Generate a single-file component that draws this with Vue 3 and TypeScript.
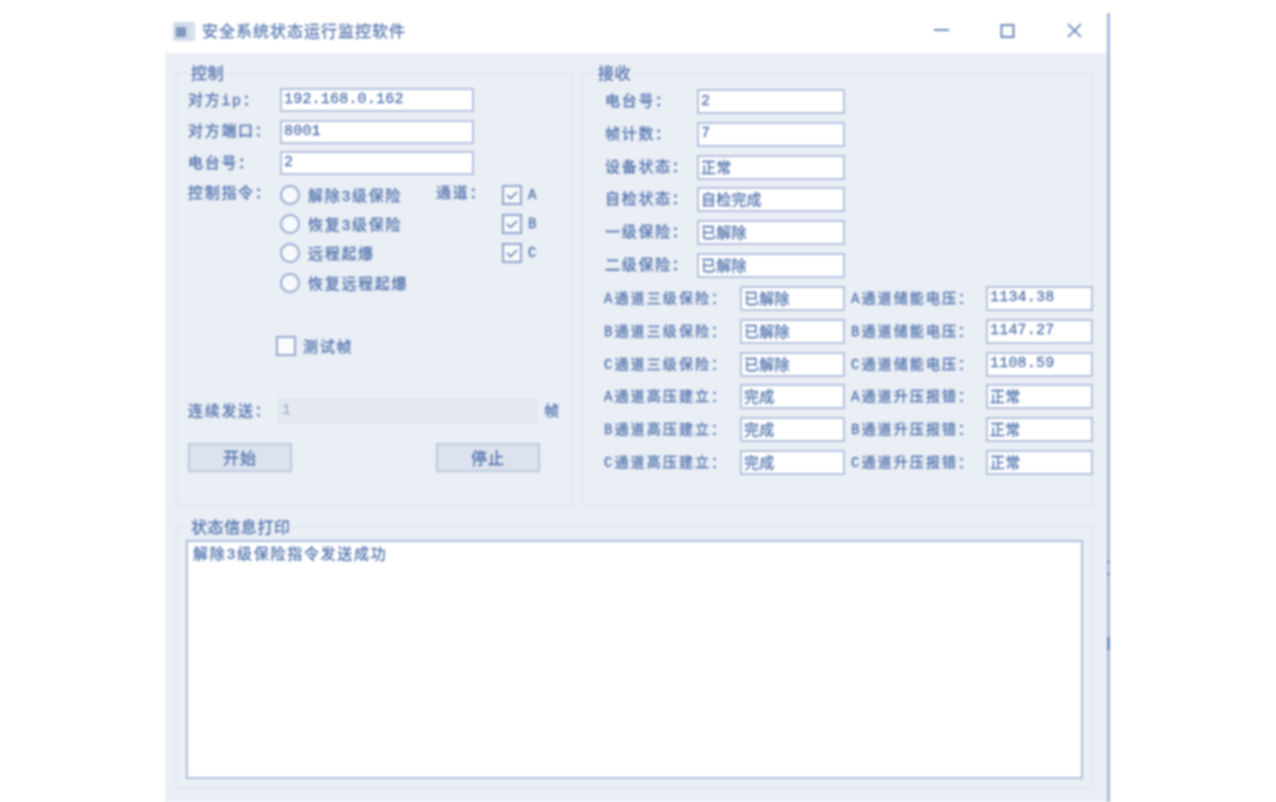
<script setup lang="ts">
interface Pair { label: string; value: string }
const topFields: Pair[] = [
  { label: '对方ip：', value: '192.168.0.162' },
  { label: '对方端口：', value: '8001' },
  { label: '电台号：', value: '2' },
]
const radios: string[] = ['解除3级保险', '恢复3级保险', '远程起爆', '恢复远程起爆']
const channels: string[] = ['A', 'B', 'C']
const status: Pair[] = [
  { label: '电台号：', value: '2' },
  { label: '帧计数：', value: '7' },
  { label: '设备状态：', value: '正常' },
  { label: '自检状态：', value: '自检完成' },
  { label: '一级保险：', value: '已解除' },
  { label: '二级保险：', value: '已解除' },
]
const details: Pair[] = [
  { label: 'A通道三级保险：', value: '已解除' },
  { label: 'A通道储能电压：', value: '1134.38' },
  { label: 'B通道三级保险：', value: '已解除' },
  { label: 'B通道储能电压：', value: '1147.27' },
  { label: 'C通道三级保险：', value: '已解除' },
  { label: 'C通道储能电压：', value: '1108.59' },
  { label: 'A通道高压建立：', value: '完成' },
  { label: 'A通道升压报错：', value: '正常' },
  { label: 'B通道高压建立：', value: '完成' },
  { label: 'B通道升压报错：', value: '正常' },
  { label: 'C通道高压建立：', value: '完成' },
  { label: 'C通道升压报错：', value: '正常' },
]
</script>

<template>
  <div class="page">
    <div class="window">
      <header class="titlebar">
        <svg class="app-icon" width="22" height="19" viewBox="0 0 22 19">
          <rect width="22" height="19" fill="#d3dbe9" />
          <rect x="3" y="5" width="10" height="10" fill="#8398bf" />
          <rect x="19" y="5" width="1" height="10" fill="#f2f4f9" />
        </svg>
        <span class="title">安全系统状态运行监控软件</span>
        <div class="controls">
          <svg width="16" height="16" viewBox="0 0 16 16"><path d="M0 7h15" stroke="#5f7db3" stroke-width="1.8" fill="none" /></svg>
          <svg width="16" height="16" viewBox="0 0 16 16"><rect x="1.5" y="2" width="12" height="12" stroke="#5f7db3" stroke-width="1.8" fill="none" /></svg>
          <svg width="16" height="16" viewBox="0 0 16 16"><path d="M2 1l13 13M15 1L2 14" stroke="#5f7db3" stroke-width="1.7" fill="none" /></svg>
        </div>
      </header>

      <main class="content">
        <section class="group control">
          <h2 class="legend">控制</h2>
          <div class="top-fields">
            <template v-for="f in topFields" :key="f.label">
              <span class="label">{{ f.label }}</span>
              <div class="field">{{ f.value }}</div>
            </template>
          </div>
          <div class="command">
            <span class="label">控制指令：</span>
            <ul class="radios">
              <li v-for="r in radios" :key="r" class="radio-row">
                <span class="radio"></span>
                <span class="label">{{ r }}</span>
              </li>
            </ul>
            <span class="label channel-label">通道：</span>
            <ul class="channels">
              <li v-for="c in channels" :key="c" class="channel-row">
                <svg class="check" width="20" height="20" viewBox="0 0 20 20">
                  <rect x="1" y="1" width="18" height="18" fill="#f7f9fc" stroke="#8fa5cb" stroke-width="2" />
                  <path d="M5 10l3.5 3.5L15 7" fill="none" stroke="#5f7db3" stroke-width="1.5" />
                </svg>
                <span class="mono">{{ c }}</span>
              </li>
            </ul>
          </div>
          <div class="test-row">
            <span class="box"></span>
            <span class="label">测试帧</span>
          </div>
          <div class="send-row">
            <span class="label">连续发送：</span>
            <div class="field disabled">1</div>
            <span class="label">帧</span>
          </div>
          <div class="buttons">
            <button class="btn" type="button">开始</button>
            <button class="btn" type="button">停止</button>
          </div>
        </section>

        <section class="group receive">
          <h2 class="legend">接收</h2>
          <div class="status-grid">
            <template v-for="s in status" :key="s.label">
              <span class="label">{{ s.label }}</span>
              <div class="field">{{ s.value }}</div>
            </template>
          </div>
          <div class="detail-grid">
            <template v-for="d in details" :key="d.label">
              <span class="label">{{ d.label }}</span>
              <div class="field">{{ d.value }}</div>
            </template>
          </div>
        </section>

        <section class="group log-group">
          <h2 class="legend">状态信息打印</h2>
          <div class="log">解除3级保险指令发送成功</div>
        </section>
      </main>

      <i class="tick t1"></i>
      <i class="tick t2"></i>
      <i class="tick t3"></i>
    </div>
  </div>
</template>

<style>
html, body { margin: 0; background: #fff; overflow: hidden; }
</style>

<style scoped>
.page {
  height: 802px;
  padding: 13px 0 0 165px;
  box-sizing: border-box;
  overflow: hidden;
  background: #fff;
}
.window {
  position: relative;
  width: 945px;
  height: 789px;
  box-sizing: border-box;
  border-right: 3px solid #a9bbd8;
  display: flex;
  flex-direction: column;
  font-family: "Liberation Mono", "Noto Sans CJK SC", monospace;
  font-size: 15px;
  color: #5374ad;
  -webkit-text-stroke: 0.3px currentColor;
  filter: blur(0.8px);
}
.titlebar {
  height: 40px;
  flex: none;
  display: flex;
  align-items: center;
  background: #fff;
  padding-left: 8px;
}
.app-icon { flex: none; margin-top: -4px; }
.title {
  margin-left: 7px;
  font-family: "Noto Sans CJK SC", sans-serif;
  font-size: 16px;
  letter-spacing: 1px;
  margin-top: -6px;
  color: #5a79b1;
}
.controls {
  margin-left: auto;
  margin-right: 25px;
  margin-top: -4px;
  display: flex;
  gap: 50px;
}
.content {
  flex: 1;
  background: #eaeef5;
  padding: 19px 0 0 10px;
  display: grid;
  grid-template-columns: 398px 511px;
  grid-template-rows: 434px 263px;
  column-gap: 9px;
  row-gap: 20px;
  align-content: start;
}
.group {
  position: relative;
  box-sizing: border-box;
  border: 2px solid #e3e8f1;
  margin: 0;
}
.legend {
  position: absolute;
  top: -13px;
  left: 11px;
  margin: 0;
  padding: 0 3px;
  background: #eaeef5;
  font-family: "Noto Sans CJK SC", sans-serif;
  font-size: 16px;
  font-weight: 400;
  line-height: 22px;
  letter-spacing: 0.6px;
  color: #5575ae;
}
.label {
  font-family: "Liberation Mono", "Noto Sans CJK SC", monospace;
  font-size: 15px;
  letter-spacing: 1.7px;
  white-space: nowrap;
  color: #5374ad;
  padding-bottom: 3px;
}
.mono { font-size: 14px; }
.field {
  box-sizing: border-box;
  background: #fff;
  border: 2px solid #b3c2dd;
  padding: 0 0 1px 2px;
  display: flex;
  align-items: center;
  white-space: nowrap;
  letter-spacing: 0.2px;
  color: #5374ad;
  font-size: 15px;
  height: 100%;
  overflow: hidden;
}
.top-fields {
  display: grid;
  grid-template-columns: 92px 194px;
  grid-auto-rows: 24px;
  row-gap: 7.5px;
  align-items: center;
  padding: 14px 0 0 11px;
}
.command {
  display: grid;
  grid-template-columns: 92px 156px 66px auto;
  align-items: start;
  padding: 5px 0 0 11px;
}
.command > .label { line-height: 30px; }
.radios, .channels { list-style: none; margin: 0; padding: 0; }
.radio-row {
  display: flex;
  align-items: center;
  gap: 8px;
  height: 29.4px;
}
.radio-row .label { padding-bottom: 0; }
.radio {
  flex: none;
  width: 20px;
  height: 20px;
  box-sizing: border-box;
  border: 2px solid #94a9cd;
  border-radius: 50%;
  background: #f7f9fc;
}
.channel-row {
  display: flex;
  align-items: center;
  gap: 6px;
  height: 29.4px;
}
.test-row {
  display: flex;
  align-items: center;
  gap: 7px;
  margin: 38px 0 0 99px;
  height: 20px;
}
.test-row .label { padding-bottom: 0; margin-top: 1px; }
.box {
  width: 20px;
  height: 20px;
  box-sizing: border-box;
  border: 2px solid #94a9cd;
  background: #fbfcfe;
}
.send-row {
  display: flex;
  align-items: center;
  margin: 42px 0 0 11px;
  height: 25px;
}
.send-row .label { padding-bottom: 1px; }
.send-row > .label:first-child { width: 90px; flex: none; }
.disabled {
  width: 259px;
  flex: none;
  background: #e3e8f1;
  border-color: #dfe4ee;
  color: #a3b4d2;
  font-size: 14px;
}
.send-row > .label:last-child { margin-left: 7px; }
.buttons {
  display: flex;
  gap: 144px;
  margin: 20px 0 0 11px;
}
.btn {
  width: 104px;
  height: 29px;
  padding: 0 0 3px;
  border: 2px solid #bccae0;
  background: #dde3ee;
  color: #5374ad;
  font-family: "Noto Sans CJK SC", sans-serif;
  font-size: 16px;
  letter-spacing: 1px;
  -webkit-text-stroke: 0.3px currentColor;
}
.status-grid {
  display: grid;
  grid-template-columns: 92px 148px;
  grid-auto-rows: 25px;
  row-gap: 7.8px;
  align-items: center;
  padding: 15px 0 0 21px;
}
.detail-grid {
  display: grid;
  grid-template-columns: 136px 105px 141px 107px;
  grid-auto-rows: 25px;
  row-gap: 7.8px;
  align-items: center;
  padding: 8px 0 0 20px;
}
.detail-grid .label { font-size: 14px; letter-spacing: 2.1px; }
.detail-grid .label:nth-child(4n + 3) { padding-left: 6px; }
.log-group {
  grid-column: 1 / 3;
  padding: 12px 8px 8px 9px;
}
.log {
  box-sizing: border-box;
  height: 239px;
  background: #fff;
  border: 2px solid #aebfdb;
  padding: 4px 5px;
  font-size: 15px;
  line-height: 20px;
  letter-spacing: 1.7px;
  color: #5374ad;
}
.tick {
  position: absolute;
  right: -3px;
  width: 3px;
  background: #6f8ab9;
}
.t1 { top: 548px; height: 2px; }
.t2 { top: 560px; height: 2px; }
.t3 { top: 624px; height: 13px; }
</style>
